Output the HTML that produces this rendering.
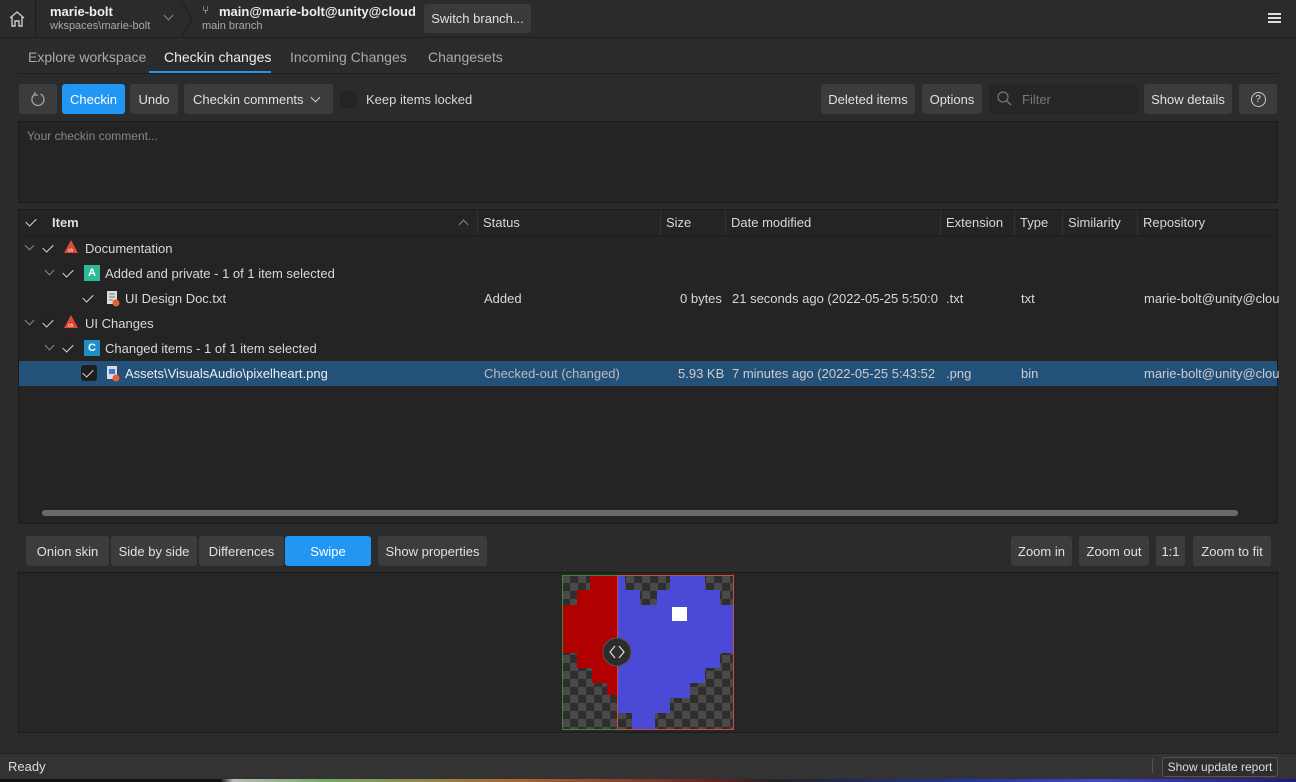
<!DOCTYPE html>
<html><head><meta charset="utf-8"><style>
*{box-sizing:border-box;margin:0;padding:0}
body{width:1296px;height:782px;overflow:hidden;background:#2b2b2b;font-family:"Liberation Sans",sans-serif;font-size:13px;color:#d8d8d8;position:relative}
.a{position:absolute}
.btn{position:absolute;background:#3c3c3c;border-radius:3px;color:#e0e0e0;font-size:13px;display:flex;align-items:center;justify-content:center;height:30px}
.blue{background:#2196f3;color:#fff}
.t{position:absolute;white-space:nowrap}
.chk{position:absolute;width:16px;height:16px;border-radius:3px;background:#232323}
.chk:after{content:"";position:absolute;left:4px;top:2px;width:5px;height:9px;border:solid #ddd;border-width:0 1.6px 1.6px 0;transform:rotate(45deg)}
.car{position:absolute;width:7px;height:7px;border:solid #888;border-width:0 1.3px 1.3px 0;transform:rotate(45deg)}
.hd{position:absolute;top:210px;height:25px;border-left:1px solid #333}
</style></head><body>
<!-- top bar -->
<div class="a" style="left:0;top:0;width:1296px;height:38px;background:#2b2b2b;border-bottom:1px solid #1e1e1e"></div>
<svg class="a" style="left:7px;top:9px" width="20" height="20" viewBox="0 0 20 20"><path d="M3 9 L10 3 L17 9 M5 8 V17 H8 V12 H12 V17 H15 V8" fill="none" stroke="#ccc" stroke-width="1.4"/></svg>
<div class="a" style="left:35px;top:0;width:1px;height:38px;background:#1e1e1e"></div>
<div class="t" style="left:50px;top:4px;font-weight:bold;color:#eee">marie-bolt</div>
<div class="t" style="left:50px;top:20px;font-size:11px;color:#aaa">wkspaces\marie-bolt</div>
<div class="car" style="left:165px;top:12px"></div>
<svg class="a" style="left:180px;top:0" width="14" height="38"><path d="M1 0 L12 19 L1 38" fill="none" stroke="#1e1e1e"/></svg>
<div class="t" style="left:202px;top:3px;color:#ccc;font-size:12px">&#x2442;</div>
<div class="t" style="left:219px;top:4px;font-weight:bold;color:#eee">main@marie-bolt@unity@cloud</div>
<div class="t" style="left:202px;top:20px;font-size:11px;color:#aaa">main branch</div>
<div class="btn" style="left:424px;top:4px;width:107px;height:29px;background:#3a3a3a">Switch branch...</div>
<div class="a" style="left:1268px;top:13px;width:13px;height:2px;background:#ddd;box-shadow:0 4px 0 #ddd,0 8px 0 #ddd"></div>
<!-- tabs -->
<div class="t" style="left:28px;top:49px;font-size:14px;color:#aaa">Explore workspace</div>
<div class="t" style="left:164px;top:49px;font-size:14px;color:#eee">Checkin changes</div>
<div class="t" style="left:290px;top:49px;font-size:14px;color:#aaa">Incoming Changes</div>
<div class="t" style="left:428px;top:49px;font-size:14px;color:#aaa">Changesets</div>
<div class="a" style="left:18px;top:73px;width:1260px;height:1px;background:#1f1f1f"></div>
<div class="a" style="left:149px;top:71px;width:122px;height:2px;background:#2196f3"></div>
<!-- toolbar -->
<div class="btn" style="left:19px;top:84px;width:38px"><svg width="16" height="16" viewBox="0 0 16 16"><path d="M10.5 3 A6 6 0 1 1 5 3.2 M5 1 V4 H8" fill="none" stroke="#aaa" stroke-width="1.2"/></svg></div>
<div class="btn blue" style="left:62px;top:84px;width:63px">Checkin</div>
<div class="btn" style="left:130px;top:84px;width:48px">Undo</div>
<div class="btn" style="left:184px;top:84px;width:149px;justify-content:flex-start;padding-left:9px">Checkin comments<div class="car" style="left:128px;top:10px;border-color:#ccc"></div></div>
<div class="a" style="left:340px;top:91px;width:17px;height:17px;border-radius:3px;background:#242424"></div>
<div class="t" style="left:366px;top:92px">Keep items locked</div>
<div class="btn" style="left:821px;top:84px;width:94px">Deleted items</div>
<div class="btn" style="left:922px;top:84px;width:60px">Options</div>
<div class="a" style="left:989px;top:84px;width:149px;height:30px;background:#262626;border-radius:3px"></div>
<svg class="a" style="left:996px;top:90px" width="18" height="18"><circle cx="7" cy="7" r="5" fill="none" stroke="#777" stroke-width="1.2"/><path d="M11 11 L15 15" stroke="#777" stroke-width="1.4"/></svg>
<div class="t" style="left:1022px;top:92px;color:#777">Filter</div>
<div class="btn" style="left:1144px;top:84px;width:88px">Show details</div>
<div class="btn" style="left:1239px;top:84px;width:38px"><div style="width:15px;height:15px;border:1.2px solid #ccc;border-radius:50%;font-size:10px;text-align:center;line-height:13px">?</div></div>
<!-- comment -->
<div class="a" style="left:18px;top:121px;width:1260px;height:82px;background:#242424;border:1px solid #1c1c1c"></div>
<div class="t" style="left:27px;top:129px;font-size:12px;color:#888">Your checkin comment...</div>
<!-- table -->
<div class="a" style="left:18px;top:209px;width:1260px;height:315px;background:#242424;border:1px solid #1c1c1c"></div>
<div class="a" style="left:18px;top:235px;width:1260px;height:1px;background:#1c1c1c"></div>
<div class="chk" style="left:24px;top:214px"></div>
<div class="t" style="left:52px;top:215px;font-weight:bold;color:#ddd">Item</div>
<div class="car" style="left:460px;top:221px;transform:rotate(-135deg)"></div>
<div class="hd" style="left:477px"></div><div class="t" style="left:483px;top:215px">Status</div>
<div class="hd" style="left:660px"></div><div class="t" style="left:666px;top:215px">Size</div>
<div class="hd" style="left:725px"></div><div class="t" style="left:731px;top:215px">Date modified</div>
<div class="hd" style="left:940px"></div><div class="t" style="left:946px;top:215px">Extension</div>
<div class="hd" style="left:1014px"></div><div class="t" style="left:1020px;top:215px">Type</div>
<div class="hd" style="left:1062px"></div><div class="t" style="left:1068px;top:215px">Similarity</div>
<div class="hd" style="left:1137px"></div><div class="t" style="left:1143px;top:215px">Repository</div>
<!-- rows -->
<div class="car" style="left:26px;top:242px"></div><div class="chk" style="left:41px;top:240px"></div>
<svg class="a" style="left:63px;top:239px" width="16" height="16"><path d="M8 1 L15 14 H1 Z" fill="#e04a35"/><text x="5" y="13" font-size="5" fill="#fff" font-family="Liberation Sans">ch</text></svg>
<div class="t" style="left:85px;top:241px">Documentation</div>
<div class="car" style="left:46px;top:267px"></div><div class="chk" style="left:61px;top:265px"></div>
<div class="a" style="left:84px;top:265px;width:16px;height:16px;background:#2fb89a;color:#fff;font-size:11px;font-weight:bold;text-align:center;line-height:16px">A</div>
<div class="t" style="left:105px;top:266px">Added and private - 1 of 1 item selected</div>
<div class="chk" style="left:81px;top:290px"></div>
<svg class="a" style="left:106px;top:290px" width="14" height="17"><rect x="1" y="1" width="10" height="13" fill="#ddd"/><path d="M3 4H9M3 7H9M3 10H7" stroke="#777"/><circle cx="10" cy="13" r="3.5" fill="#e0642a"/></svg>
<div class="t" style="left:125px;top:291px">UI Design Doc.txt</div>
<div class="t" style="left:484px;top:291px">Added</div>
<div class="t" style="left:680px;top:291px">0 bytes</div>
<div class="t" style="left:732px;top:291px">21 seconds ago (2022-05-25 5:50:0</div>
<div class="t" style="left:946px;top:291px">.txt</div>
<div class="t" style="left:1021px;top:291px">txt</div>
<div class="t" style="left:1144px;top:291px">marie-bolt@unity@clou</div>
<div class="car" style="left:26px;top:317px"></div><div class="chk" style="left:41px;top:315px"></div>
<svg class="a" style="left:63px;top:314px" width="16" height="16"><path d="M8 1 L15 14 H1 Z" fill="#e04a35"/><text x="5" y="13" font-size="5" fill="#fff" font-family="Liberation Sans">ch</text></svg>
<div class="t" style="left:85px;top:316px">UI Changes</div>
<div class="car" style="left:46px;top:342px"></div><div class="chk" style="left:61px;top:340px"></div>
<div class="a" style="left:84px;top:340px;width:16px;height:16px;background:#1e8ec9;color:#fff;font-size:11px;font-weight:bold;text-align:center;line-height:16px">C</div>
<div class="t" style="left:105px;top:341px">Changed items - 1 of 1 item selected</div>
<div class="a" style="left:19px;top:361px;width:1258px;height:25px;background:#24517a"></div>
<div class="chk" style="left:81px;top:365px;background:#1e1e1e"></div>
<svg class="a" style="left:106px;top:365px" width="14" height="17"><rect x="1" y="1" width="10" height="13" fill="#ddd"/><rect x="3" y="4" width="6" height="5" fill="#3a7bd5"/><circle cx="10" cy="13" r="3.5" fill="#e0642a"/></svg>
<div class="t" style="left:125px;top:366px;color:#eee">Assets\VisualsAudio\pixelheart.png</div>
<div class="t" style="left:484px;top:366px;color:#bbb">Checked-out (changed)</div>
<div class="t" style="left:678px;top:366px;color:#ccc">5.93 KB</div>
<div class="t" style="left:732px;top:366px;color:#ccc">7 minutes ago (2022-05-25 5:43:52</div>
<div class="t" style="left:946px;top:366px;color:#ccc">.png</div>
<div class="t" style="left:1021px;top:366px;color:#ccc">bin</div>
<div class="t" style="left:1144px;top:366px;color:#ccc">marie-bolt@unity@clou</div>
<div class="a" style="left:42px;top:510px;width:1196px;height:6px;border-radius:3px;background:#6a6a6a"></div>
<!-- image diff toolbar -->
<div class="btn" style="left:26px;top:536px;width:83px">Onion skin</div>
<div class="btn" style="left:111px;top:536px;width:86px">Side by side</div>
<div class="btn" style="left:199px;top:536px;width:85px">Differences</div>
<div class="btn blue" style="left:285px;top:536px;width:86px">Swipe</div>
<div class="btn" style="left:378px;top:536px;width:109px">Show properties</div>
<div class="btn" style="left:1011px;top:536px;width:61px">Zoom in</div>
<div class="btn" style="left:1079px;top:536px;width:70px">Zoom out</div>
<div class="btn" style="left:1156px;top:536px;width:29px">1:1</div>
<div class="btn" style="left:1193px;top:536px;width:78px">Zoom to fit</div>
<div class="a" style="left:18px;top:572px;width:1260px;height:161px;background:#262626;border:1px solid #1c1c1c"></div>
<svg class="a" style="left:562px;top:575px" width="172" height="155" viewBox="0 0 172 155">
<defs><pattern id="ck" width="16" height="16" patternUnits="userSpaceOnUse"><rect width="16" height="16" fill="#2e2e2e"/><rect width="8" height="8" fill="#4a4a4a"/><rect x="8" y="8" width="8" height="8" fill="#4a4a4a"/></pattern></defs>
<rect width="172" height="155" fill="url(#ck)"/>
<path d="M28 0H55V120H45V108H30V93H15V78H0V30H15V15H28Z" fill="#b00000"/>
<path d="M55 0H63V15H78V30H95V15H108V0H143V15H158V30H172V78H158V93H143V108H128V123H108V138H93V155H70V138H55Z" fill="#4a4ad6"/>
<rect x="110" y="32" width="15" height="14" fill="#fff"/>
<rect x="0.5" y="0.5" width="55" height="154" fill="none" stroke="#3a8a3a"/>
<rect x="55.5" y="0.5" width="116" height="154" fill="none" stroke="#d04a4a"/>
<circle cx="55" cy="77" r="14" fill="#2c2c2c" stroke="#555"/>
<path d="M53 71L48 77L53 83M57 71L62 77L57 83" fill="none" stroke="#ddd" stroke-width="1.2"/>
</svg>
<!-- status -->
<div class="a" style="left:0;top:753px;width:1296px;height:26px;background:#333;border-top:1px solid #222"></div>
<div class="t" style="left:8px;top:759px;color:#ddd">Ready</div>
<div class="a" style="left:1152px;top:759px;width:1px;height:14px;background:#555"></div>
<div class="a" style="left:1162px;top:757px;width:116px;height:20px;border:1px solid #555;border-radius:3px;background:#2e2e2e;font-size:12px;color:#ddd;text-align:center;line-height:18px">Show update report</div>
<div class="a" style="left:0;top:779px;width:1296px;height:3px;background:linear-gradient(90deg,#111 0,#111 17%,#bbb 18%,#7a6 25%,#a63 40%,#622 55%,#222 60%,#2236a0 75%,#44c 85%,#1a1a80 100%)"></div>
</body></html>
